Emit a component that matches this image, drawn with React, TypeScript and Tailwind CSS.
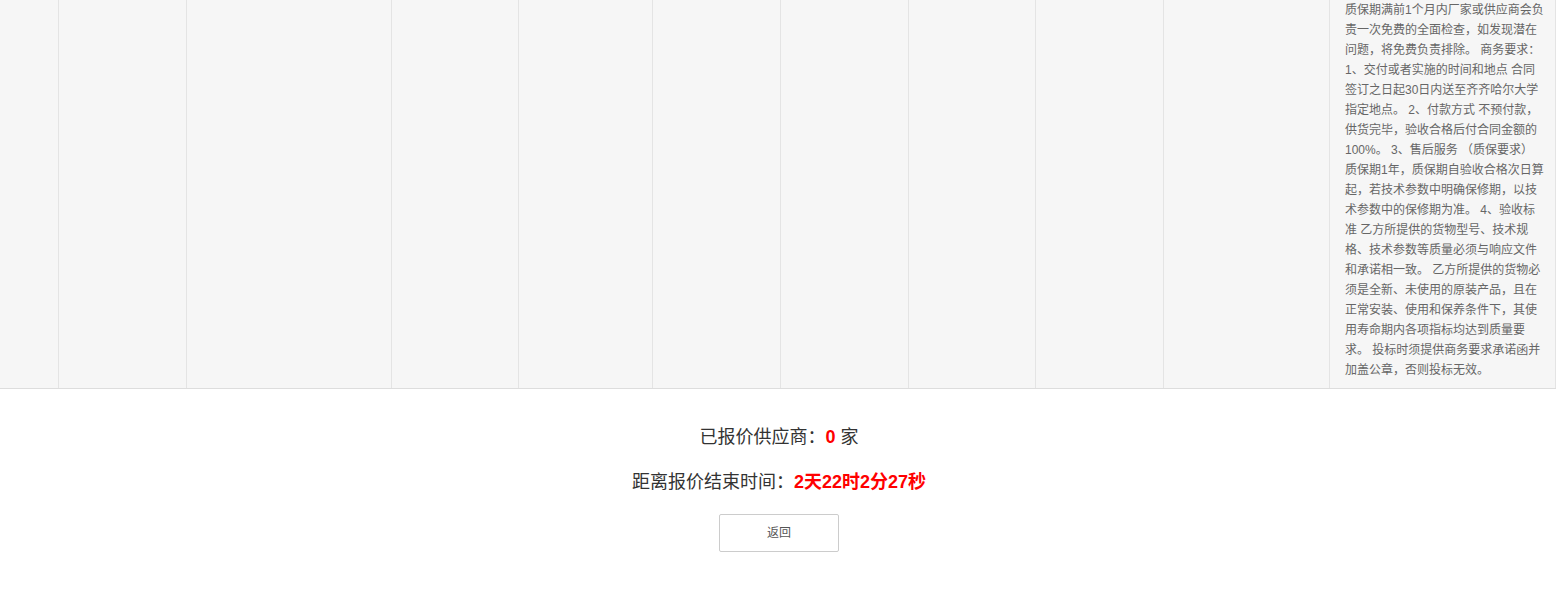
import React from "react";

const lines = [
  "质保期满前1个月内厂家或供应商会负",
  "责一次免费的全面检查，如发现潜在",
  "问题，将免费负责排除。 商务要求：",
  "1、交付或者实施的时间和地点 合同",
  "签订之日起30日内送至齐齐哈尔大学",
  "指定地点。 2、付款方式 不预付款，",
  "供货完毕，验收合格后付合同金额的",
  "100%。 3、售后服务 （质保要求）",
  "质保期1年，质保期自验收合格次日算",
  "起，若技术参数中明确保修期，以技",
  "术参数中的保修期为准。 4、验收标",
  "准 乙方所提供的货物型号、技术规",
  "格、技术参数等质量必须与响应文件",
  "和承诺相一致。 乙方所提供的货物必",
  "须是全新、未使用的原装产品，且在",
  "正常安装、使用和保养条件下，其使",
  "用寿命期内各项指标均达到质量要",
  "求。 投标时须提供商务要求承诺函并",
  "加盖公章，否则投标无效。",
];

export default function App() {
  const font = { fontFamily: '"Liberation Sans", "Noto Sans CJK SC", sans-serif' };
  return (
    <div className="w-[1556px] h-[589px] bg-white overflow-hidden" style={font}>
      <div className="grid grid-cols-[59px_128px_205px_127px_134px_128px_128px_127px_128px_166px_226px] bg-[#f6f6f6] border-b border-[#dddddd]">
        {Array.from({ length: 10 }).map((_, i) => (
          <div key={i} className="border-r border-[#e4e4e4]" />
        ))}
        <div className="border-r border-[#e4e4e4] pl-[15px] pr-[8px] pb-[8px] text-[12px] leading-[20px] text-[#666666]">
          {lines.map((l, i) => (
            <span key={i} className="block whitespace-nowrap">
              {l}
            </span>
          ))}
        </div>
      </div>
      <div className="flex flex-col items-center pt-[35px] pl-[2px] text-[#333333]">
        <p className="text-[18px] leading-[26px]">
          已报价供应商：<span className="text-[#ff0000] font-bold">0</span> 家
        </p>
        <p className="mt-[19px] text-[18px] leading-[26px]">
          距离报价结束时间：<span className="text-[#ff0000] font-bold">2天22时2分27秒</span>
        </p>
        <button className="mt-[19px] w-[120px] h-[38px] border border-[#cccccc] rounded-[2px] bg-white text-[12px] text-[#555555]">
          返回
        </button>
      </div>
    </div>
  );
}
